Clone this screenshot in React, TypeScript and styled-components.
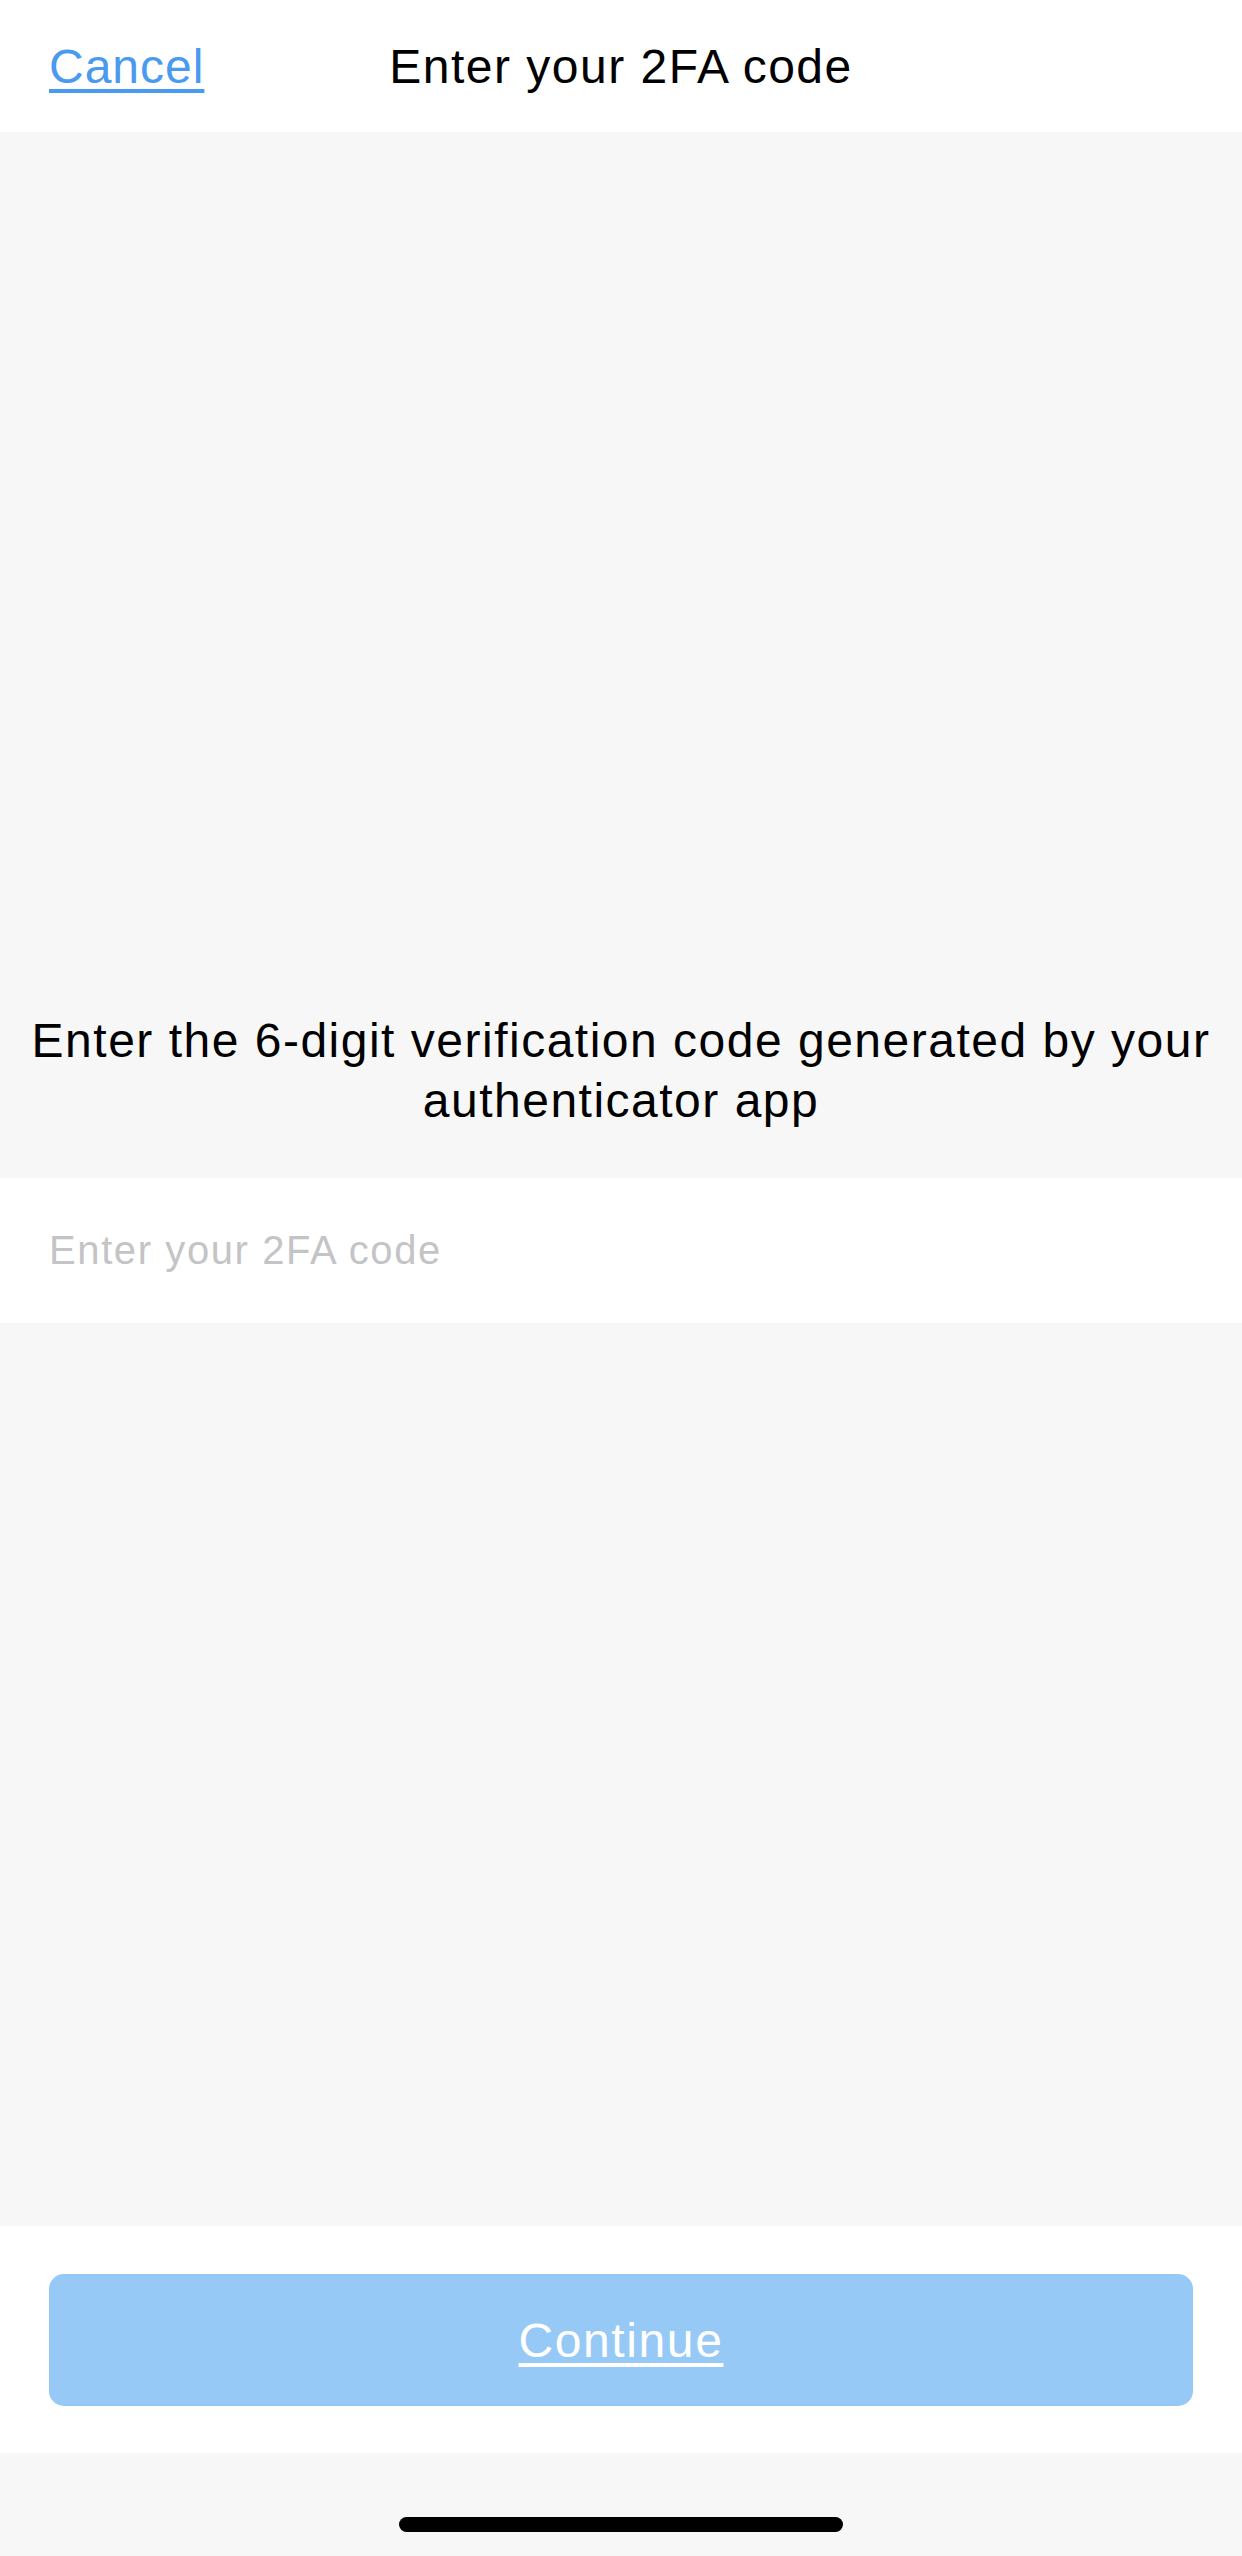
import * as React from 'react';
import styled, { createGlobalStyle } from 'styled-components';

const COLOR_BG = '#f7f7f7';
const COLOR_BLUE = '#4a9af0';
const FONT = '"Liberation Sans", Arial, sans-serif';

const GlobalStyle = createGlobalStyle`
  html, body {
    margin: 0;
    padding: 0;
    background: ${COLOR_BG};
    font-family: ${FONT};
    letter-spacing: 1.5px;
  }
  * { box-sizing: border-box; }
`;

const Screen = styled.div`
  display: flex;
  flex-direction: column;
  width: 1242px;
  height: 2556px;
  background: ${COLOR_BG};
`;

const Header = styled.div`
  display: grid;
  grid-template-columns: 1fr auto 1fr;
  align-items: center;
  height: 132px;
  padding: 0 49px;
  background: #fff;
`;

const CancelLink = styled.a`
  justify-self: start;
  font-size: 48px;
  letter-spacing: 1px;
  color: ${COLOR_BLUE};
  text-decoration: underline;
  text-decoration-thickness: 4px;
  text-underline-offset: 6px;
  cursor: pointer;
`;

const Title = styled.div`
  font-size: 48px;
  color: #000;
`;

const Intro = styled.div`
  display: flex;
  align-items: flex-end;
  justify-content: center;
  height: 1046px;
  padding: 0 16px 47px;
`;

const IntroText = styled.p`
  margin: 0;
  font-size: 48px;
  line-height: 60px;
  text-align: center;
  color: #000;
`;

const CodeInput = styled.input`
  display: block;
  width: 100%;
  height: 145px;
  padding: 0 49px;
  border: none;
  outline: none;
  background: #fff;
  font-family: ${FONT};
  font-size: 40px;
  letter-spacing: 1.6px;
  color: #000;

  &::placeholder {
    color: #c4c4c6;
  }
`;

const Spacer = styled.div`
  flex: 1;
`;

const Footer = styled.div`
  display: flex;
  height: 227px;
  padding: 48px 49px 0;
  background: #fff;
`;

const ContinueButton = styled.button<{ disabled?: boolean }>`
  width: 100%;
  height: 132px;
  border: none;
  border-radius: 15px;
  background: ${({ disabled }) => (disabled ? '#97c9f6' : COLOR_BLUE)};
  color: #fff;
  font-family: ${FONT};
  font-size: 48px;
  letter-spacing: 1.6px;
  text-decoration: underline;
  text-decoration-thickness: 4px;
  text-underline-offset: 6px;
`;

const HomeBar = styled.div`
  display: flex;
  align-items: flex-start;
  justify-content: center;
  height: 103px;
  padding-top: 64px;
`;

const HomeIndicator = styled.div`
  width: 444px;
  height: 15px;
  border-radius: 8px;
  background: #000;
`;

export default function App() {
  const [code, setCode] = React.useState('');

  return (
    <Screen>
      <GlobalStyle />
      <Header>
        <CancelLink>Cancel</CancelLink>
        <Title>Enter your 2FA code</Title>
        <span />
      </Header>
      <Intro>
        <IntroText>
          Enter the 6-digit verification code generated by your authenticator app
        </IntroText>
      </Intro>
      <CodeInput
        value={code}
        onChange={e => setCode(e.target.value)}
        placeholder="Enter your 2FA code"
        inputMode="numeric"
      />
      <Spacer />
      <Footer>
        <ContinueButton disabled={code.length < 6}>Continue</ContinueButton>
      </Footer>
      <HomeBar>
        <HomeIndicator />
      </HomeBar>
    </Screen>
  );
}
